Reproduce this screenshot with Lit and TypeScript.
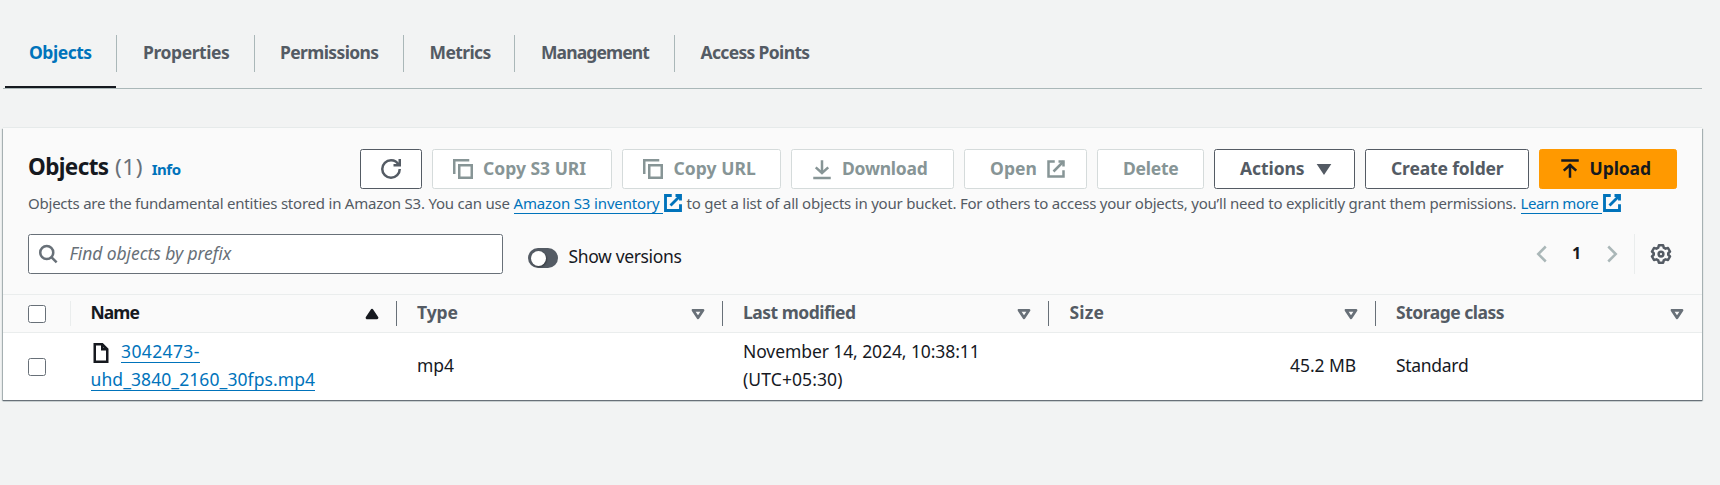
import { LitElement, html, css, svg, nothing } from "lit";
import { customElement } from "lit/decorators.js";

const icon = (body: unknown, cls = "") =>
  html`<svg class="icon ${cls}" viewBox="0 0 16 16" aria-hidden="true">${body}</svg>`;

const copyIcon = icon(svg`<path d="M1 12V1h12"/><path d="M5 5h10v10H5z"/>`);
const externalIcon = icon(svg`<path d="M10 2h4v4"/><path d="m6 10 8-8"/><path d="M14 9.05V14H2V2h5"/>`);
const caretDown = icon(svg`<path class="solid" d="M4 5h8l-4 6z"/>`);
const sortDown = icon(svg`<path d="M4 5h8l-4 6z"/>`, "sort");
const sortUp = icon(svg`<path class="solid" d="M4 11h8L8 5z"/>`, "sort");

interface Tab { label: string; cls: string; }
const tabs: Tab[] = [
  { label: "Objects", cls: "tab-objects" },
  { label: "Properties", cls: "tab-properties" },
  { label: "Permissions", cls: "tab-permissions" },
  { label: "Metrics", cls: "tab-metrics" },
  { label: "Management", cls: "tab-management" },
  { label: "Access Points", cls: "tab-access" },
];

interface Action { label: string; cls: string; before?: unknown; after?: unknown; }
const actions: Action[] = [
  { label: "", cls: "refresh", before: icon(svg`<path d="M15 8c0 3.87-3.13 7-7 7s-7-3.13-7-7 3.13-7 7-7c2.79 0 5.2 1.63 6.33 4"/><path d="M10 5h5V0"/>`) },
  { label: "Copy S3 URI", cls: "copy-uri off", before: copyIcon },
  { label: "Copy URL", cls: "copy-url off", before: copyIcon },
  { label: "Download", cls: "download off", before: icon(svg`<path d="M1 15.2h14"/><path d="M8 1v10"/><path d="M3 6.7 8 11.2l5-4.5"/>`) },
  { label: "Open", cls: "open off", after: externalIcon },
  { label: "Delete", cls: "delete off" },
  { label: "Actions", cls: "menu", after: caretDown },
  { label: "Create folder", cls: "create" },
  { label: "Upload", cls: "upload", before: icon(svg`<path d="M1 1.2h14"/><path d="M8 15V4"/><path d="M3 9.3 8 4.8l5 4.5"/>`) },
];

@customElement("app-root")
export class AppRoot extends LitElement {
  static styles = css`
    :host {
      display: block;
      box-sizing: border-box;
      width: 1720px;
      height: 485px;
      padding-left: 3px;
      overflow: hidden;
      background: #f2f3f3;
      color: #16191f;
      font: 400 17.5px/28px "Noto Sans", "Open Sans", sans-serif;
      white-space: nowrap;
    }
    * { box-sizing: border-box; }
    .icon {
      display: block;
      flex: none;
      width: 20px;
      height: 20px;
      fill: none;
      stroke: currentColor;
      stroke-width: 2;
      overflow: visible;
    }
    .solid { fill: currentColor; }

    .tabs {
      display: flex;
      width: 1699px;
      height: 89px;
      padding: 35px 0 0 2px;
      border-bottom: 1px solid #aab7b8;
      font-weight: 700;
      color: #545b64;
    }
    .tab {
      height: 37px;
      padding: 3px 0 0 25.5px;
      border-right: 1px solid #aab7b8;
    }
    .tab:last-child { border-right: 0; }
    .tab-objects { width: 112px; padding-left: 24px; letter-spacing: -0.47px; color: #0073bb; }
    .tab-properties { width: 138px; padding-left: 26px; letter-spacing: -0.42px; }
    .tab-permissions { width: 149px; padding-left: 25px; letter-spacing: -0.62px; }
    .tab-metrics { width: 111px; padding-left: 25.5px; letter-spacing: -0.62px; }
    .tab-management { width: 160px; padding-left: 26px; letter-spacing: -0.88px; }
    .tab-access { padding-left: 25.5px; letter-spacing: -0.66px; }
    .marker {
      width: 111px;
      height: 2px;
      margin: -3px 0 0 2px;
      position: relative;
      background: #16191f;
    }

    .card {
      width: 1699px;
      height: 272px;
      margin-top: 40px;
      background: #fff;
      box-shadow: 0 -1px 0 #e6eaea, 0 1px 1px #687078, 1px 1px 1px #b4bdbe, -1px 1px 1px #b4bdbe;
    }
    .head {
      height: 167px;
      padding: 21px 25px 0 25px;
      background: #fafafa;
      border-bottom: 1px solid #eaeded;
    }
    .title-row { display: flex; justify-content: space-between; height: 40px; }
    h2 {
      display: flex;
      align-items: baseline;
      margin: 0;
      font-size: 22.5px;
      line-height: 36px;
      letter-spacing: -0.62px;
    }
    .count { margin-left: 6.5px; font-weight: 400; color: #687078; letter-spacing: 0.6px; }
    .info { margin-left: 8.5px; font-size: 15px; letter-spacing: -0.45px; color: #0073bb; }
    .actions { display: flex; gap: 10px; }
    .btn {
      display: flex;
      align-items: center;
      height: 40px;
      border: 1px solid #545b64;
      border-radius: 2.5px;
      background: #fff;
      color: #545b64;
      font-weight: 700;
      line-height: 38px;
    }
    .btn .label { height: 38px; margin-top: -3px; }
    .off { border-color: #d5dbdb; color: #879596; }
    .refresh { width: 62px; padding-left: 20px; }
    .refresh .label { display: none; }
    .copy-uri { width: 180px; padding-left: 20px; gap: 10px; }
    .copy-url { width: 159px; padding-left: 20px; gap: 10.5px; letter-spacing: 0.07px; }
    .download { width: 163px; padding-left: 20px; gap: 10px; letter-spacing: -0.24px; }
    .open { width: 123px; padding-left: 25px; gap: 9px; letter-spacing: 0.07px; }
    .delete { width: 107px; padding-left: 25px; letter-spacing: -0.24px; }
    .menu { width: 141px; padding-left: 25px; gap: 9.5px; letter-spacing: -0.08px; }
    .create { width: 164px; padding-left: 25px; letter-spacing: -0.15px; }
    .upload { width: 138px; padding-left: 20px; gap: 9.5px; border-color: #ff9900; background: #ff9900; color: #16191f; letter-spacing: -0.08px; }

    .desc {
      display: flex;
      align-items: baseline;
      height: 45px;
      padding-top: 3px;
      font-size: 15px;
      line-height: 22px;
      color: #545b64;
    }
    .desc1 { width: 485.5px; letter-spacing: -0.225px; }
    .desc2 { width: 834px; margin-left: 4px; letter-spacing: -0.215px; }
    .link { color: #0073bb; height: 22px; border-bottom: 1px solid #0073bb; }
    .link1 { width: 149px; letter-spacing: -0.15px; }
    .link2 { width: 81px; letter-spacing: -0.38px; }
    .ext { margin-top: 1px; color: #0073bb; align-self: flex-start; }
    .ext .icon { stroke-width: 2.3; }

    .filters { display: flex; height: 40px; }
    .search {
      display: flex;
      align-items: center;
      width: 475px;
      height: 40px;
      padding-left: 9px;
      border: 1px solid #687078;
      border-radius: 2.5px;
      background: #fff;
      color: #687078;
      font-style: italic;
    }
    .placeholder { margin: -3px 0 0 11.5px; letter-spacing: -0.08px; }
    .toggle {
      width: 30px;
      height: 20px;
      margin: 14px 0 0 25px;
      padding: 2.5px;
      border-radius: 10px;
      background: #545b64;
    }
    .knob {
      width: 15px;
      height: 15px;
      border-radius: 50%;
      background: #fff;
      box-shadow: 1px 1px 2px rgba(0, 0, 0, 0.35);
    }
    .versions { margin: 8px 0 0 10.5px; letter-spacing: -0.36px; }
    .pager { display: flex; align-items: center; margin-left: auto; height: 40px; color: #aab7b8; }
    .page { width: 10px; margin: -2px 20px 0 20px; font-weight: 700; font-size: 16px; color: #16191f; }
    .prefs { display: flex; align-items: center; width: 43px; height: 40px; margin-left: 12px; padding-left: 16px; border-left: 1px solid #eaeded; color: #545b64; }
    .prefs .icon { stroke-width: 2; }

    .row { display: grid; grid-template-columns: 67px 327px 326px 326px 327px 326px; }
    .cols { height: 38px; background: #fafafa; border-bottom: 1px solid #eaeded; font-weight: 700; color: #545b64; }
    .th {
      display: flex;
      align-items: center;
      height: 25px;
      margin-top: 6px;
      padding: 0 14px 0 20px;
      border-right: 1px solid #687078;
    }
    .th .label { margin-top: -4px; }
    .th:last-child { border-right: 0; padding-right: 15px; }
    .th .sort { margin-left: auto; color: #687078; stroke-width: 2.2; stroke-linejoin: round; }
    .th.pick { width: 68px; padding: 0 0 0 25px; border-right-color: #eaeded; }
    .th.name { padding-left: 20.5px; padding-right: 14px; color: #16191f; letter-spacing: -0.95px; }
    .th.name .sort { color: #16191f; }
    .type { letter-spacing: -0.1px; }
    .modified, .class { letter-spacing: -0.5px; }
    .size { padding-left: 20.5px; letter-spacing: 0.2px; }
    .box { width: 18px; height: 18px; border: 1px solid #687078; border-radius: 2.5px; background: #fff; }

    .data { height: 67px; align-items: center; }
    .td { padding-left: 20px; }
    .td.pick { padding-left: 25px; }
    .name-cell { height: 67px; padding: 5px 0 0 20px; }
    .file { display: flex; }
    .file .icon { margin: 5px 10px 0 1px; }
    .file-link { display: block; height: 25px; line-height: 27px; border-bottom: 1px solid #0073bb; color: #0073bb; }
    .part1 { width: 79px; letter-spacing: 0.38px; }
    .part2 { width: 224.5px; margin: 3px 0 0 0.5px; letter-spacing: 0.08px; }
    .mp4, .num, .std { padding-bottom: 3px; }
    .date { padding-bottom: 4px; letter-spacing: -0.09px; }
    .zone { display: block; letter-spacing: 0.1px; }
    .num { padding-right: 20px; text-align: right; letter-spacing: -0.08px; }
    .std { letter-spacing: -0.3px; }
  `;

  private th(label: string, cls: string, mark = sortDown) {
    return html`<div class="th ${cls}"><span class="label">${label}</span>${mark}</div>`;
  }

  render() {
    return html`
      <nav class="tabs">${tabs.map((t) => html`<div class="tab ${t.cls}">${t.label}</div>`)}</nav>
      <div class="marker"></div>
      <section class="card">
        <div class="head">
          <div class="title-row">
            <h2>Objects<span class="count">(1)</span><span class="info">Info</span></h2>
            <div class="actions">
              ${actions.map((a) => html`<div class="btn ${a.cls}">${a.before ?? nothing}<span class="label">${a.label}</span>${a.after ?? nothing}</div>`)}
            </div>
          </div>
          <div class="desc">
            <span class="desc1">Objects are the fundamental entities stored in Amazon S3. You can use</span>
            <span class="link link1">Amazon S3 inventory</span><span class="ext">${externalIcon}</span>
            <span class="desc2">to get a list of all objects in your bucket. For others to access your objects, you’ll need to explicitly grant them permissions.</span>
            <span class="link link2">Learn more</span><span class="ext">${externalIcon}</span>
          </div>
          <div class="filters">
            <div class="search">
              ${icon(svg`<circle cx="7" cy="6.8" r="5.2"/><path d="m10.7 10.5 4.2 4.2"/>`)}
              <span class="placeholder">Find objects by prefix</span>
            </div>
            <div class="toggle"><div class="knob"></div></div>
            <span class="versions">Show versions</span>
            <div class="pager">
              ${icon(svg`<path d="m11 2-6 6 6 6"/>`)}
              <span class="page">1</span>
              ${icon(svg`<path d="m5 2 6 6-6 6"/>`)}
              <div class="prefs">
                ${icon(svg`<path stroke-linejoin="round" d="M6.300 1h3.400l.5 1.900 1.400.8 2-.5 1.600 2.800-1.400 1.400v1.200l1.400 1.400-1.600 2.800-2-.5-1.400.8-.5 1.900H6.300l-.5-1.900-1.400-.8-2 .5L.8 10l1.400-1.400V7.400L.8 6l1.600-2.800 2 .5 1.400-.8z"/><circle cx="8" cy="8" r="1.900"/>`)}
              </div>
            </div>
          </div>
        </div>
        <div class="row cols">
          <div class="th pick"><div class="box"></div></div>
          ${this.th("Name", "name", sortUp)}
          ${this.th("Type", "type")}
          ${this.th("Last modified", "modified")}
          ${this.th("Size", "size")}
          ${this.th("Storage class", "class")}
        </div>
        <div class="row data">
          <div class="td pick"><div class="box"></div></div>
          <div class="td name-cell">
            <div class="file">
              ${icon(svg`<path d="M9 1H3v14h10V5z"/><path d="M9 1v4h4"/>`)}
              <span class="file-link part1">3042473-</span>
            </div>
            <span class="file-link part2">uhd_3840_2160_30fps.mp4</span>
          </div>
          <div class="td mp4">mp4</div>
          <div class="td date">November 14, 2024, 10:38:11<span class="zone">(UTC+05:30)</span></div>
          <div class="td num">45.2 MB</div>
          <div class="td std">Standard</div>
        </div>
      </section>
    `;
  }
}
